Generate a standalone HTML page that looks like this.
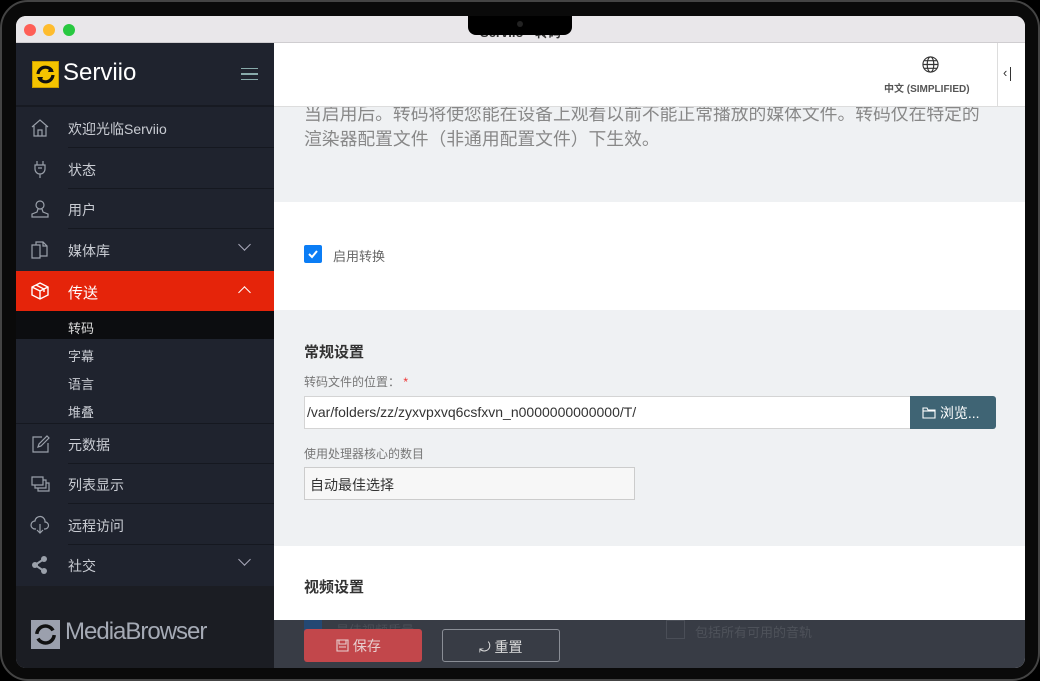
<!DOCTYPE html>
<html><head><meta charset="utf-8"><style>
*{box-sizing:border-box;margin:0;padding:0}
body{width:1040px;height:681px;background:#000;position:relative;overflow:hidden;font-family:"Liberation Sans","Noto Sans CJK SC",sans-serif}
.bez{position:absolute;left:0;top:0;width:1040px;height:681px;border-radius:28px;background:#0a0a0a;border:2px solid #444}
.win{position:absolute;left:16px;top:16px;width:1009px;height:652px;border-radius:10px;overflow:hidden;background:#fff}
.tb{position:absolute;left:0;top:0;width:1009px;height:27px;background:#e9e7ea;border-bottom:1px solid #cfcdd0}
.dot{position:absolute;top:8px;width:12px;height:12px;border-radius:50%}
.ttl{position:absolute;left:0;width:1009px;top:6px;text-align:center;font-size:13px;font-weight:bold;color:#333}
.notch{position:absolute;left:452px;top:0;width:104px;height:19px;background:#000;border-radius:0 0 8px 8px}
.sb{position:absolute;left:0;top:27px;width:258px;height:625px;background:#1f232e}
.logo{height:64px;border-bottom:2px solid #171a22;position:relative}
.it{position:absolute;left:0;width:258px;height:40px;color:#c9ccd3;font-size:14px}
.it span{position:absolute;left:52px;top:11px}
.it .ln{position:absolute;left:52px;right:0;bottom:0;height:1px;background:#151820}
.it svg{position:absolute;left:14px;top:10px}
.chev{position:absolute;left:224px;top:14px;width:9px;height:9px;border-right:1.3px solid #aab;border-bottom:1.3px solid #aab;transform:rotate(45deg)}
.sub{position:absolute;left:52px;color:#c9ccd3;font-size:13px}
.main{position:absolute;left:258px;top:27px;width:751px;height:625px}
.sec{position:absolute;left:0;width:751px}
.g{background:#eff1f3}
.lbl{font-size:12px;color:#777}
</style></head><body>
<div class="bez"></div>
<div class="win">
<div class="tb">
<div class="dot" style="left:8px;background:#fe5f57"></div>
<div class="dot" style="left:27px;background:#febc2e"></div>
<div class="dot" style="left:47px;background:#28c840"></div>
<div class="ttl">Serviio - 转码</div>
<div class="notch"><div style="position:absolute;left:49px;top:5px;width:6px;height:6px;border-radius:50%;background:#222"></div></div>
</div>
<div class="sb">
<div class="logo">
<div style="position:absolute;left:16px;top:18px;width:27px;height:27px;background:#f5c400;border:1px solid #c99c00">
<svg width="25" height="25" viewBox="0 0 25 25"><path d="M5 12a7.5 7.5 0 0 1 14-3" stroke="#111" stroke-width="3.2" fill="none"/><path d="M20 13a7.5 7.5 0 0 1-14 3" stroke="#111" stroke-width="3.2" fill="none"/><path d="M17 5l4 5-6 0z M8 20l-4-5 6 0z" fill="#111"/></svg></div>
<div style="position:absolute;left:47px;top:16px;font-size:24px;color:#fff">Serviio</div>
<div style="position:absolute;left:225px;top:25px;width:17px;height:12px;border-top:1.5px solid #8aa;border-bottom:1.5px solid #8aa"></div>
<div style="position:absolute;left:225px;top:30px;width:17px;height:1.5px;background:#8aa"></div>
</div>
<div class="it" style="top:65px"><svg width="20" height="20" viewBox="0 0 20 20" fill="none" stroke="#9aa0aa" stroke-width="1.2"><path d="M2 9L10 2l8 7M4 8v10h12V8M8 18v-6h4v6"/></svg><span>欢迎光临Serviio</span><div class="ln"></div></div>
<div class="it" style="top:106px"><svg width="20" height="20" viewBox="0 0 20 20" fill="none" stroke="#9aa0aa" stroke-width="1.2"><path d="M7 2v4M13 2v4M5 6h10v4a5 5 0 0 1-10 0zM10 15v4M8 9h4"/></svg><span>状态</span><div class="ln"></div></div>
<div class="it" style="top:146px"><svg width="20" height="20" viewBox="0 0 20 20" fill="none" stroke="#9aa0aa" stroke-width="1.2"><circle cx="10" cy="6" r="4"/><path d="M8 10l-1 3-5 2v3h16v-3l-5-2-1-3"/></svg><span>用户</span><div class="ln"></div></div>
<div class="it" style="top:187px"><svg width="20" height="20" viewBox="0 0 20 20" fill="none" stroke="#9aa0aa" stroke-width="1.2"><path d="M2 5h8v13H2zM6 5V2h7l4 4v10h-7M13 2v4h4"/></svg><span>媒体库</span><div class="chev" style="top:10px"></div></div>
<div class="it" style="top:228px;background:#e5240a;color:#fff"><svg width="20" height="20" viewBox="0 0 20 20" fill="none" stroke="#fff" stroke-width="1.4"><path d="M10 2l8 4v8l-8 4-8-4V6zM2 6l8 4 8-4M10 10v8M6 4l8 4v3"/></svg><span style="font-size:15px">传送</span><div class="chev" style="top:17px;transform:rotate(-135deg);border-color:#fff"></div></div>
<div style="position:absolute;top:268px;left:0;width:258px;height:28px;background:#0c0d10"></div>
<div class="sub" style="top:275px;color:#ddd">转码</div>
<div class="sub" style="top:303px">字幕</div>
<div class="sub" style="top:331px">语言</div>
<div class="sub" style="top:359px">堆叠</div>
<div style="position:absolute;top:380px;left:0;width:258px;height:1px;background:#151820"></div>
<div class="it" style="top:381px"><svg width="20" height="20" viewBox="0 0 20 20" fill="none" stroke="#9aa0aa" stroke-width="1.2"><path d="M12 3H3v15h15V9M8 13l1-3 8-8 2 2-8 8z"/></svg><span>元数据</span><div class="ln"></div></div>
<div class="it" style="top:421px"><svg width="20" height="20" viewBox="0 0 20 20" fill="none" stroke="#9aa0aa" stroke-width="1.2"><path d="M2 3h11v8H2zM5 11v3h11V6h-3M8 14v3h11V9h-3"/></svg><span>列表显示</span><div class="ln"></div></div>
<div class="it" style="top:462px"><svg width="20" height="20" viewBox="0 0 20 20" fill="none" stroke="#9aa0aa" stroke-width="1.2"><path d="M6 14H5a4 4 0 0 1 0-8 5 5 0 0 1 10 1 3.5 3.5 0 0 1 0 7h-1M10 9v9M7 15l3 3 3-3"/></svg><span>远程访问</span><div class="ln"></div></div>
<div class="it" style="top:502px"><svg width="20" height="20" viewBox="0 0 20 20" fill="#9aa0aa"><circle cx="14" cy="4" r="3"/><circle cx="5" cy="10" r="3"/><circle cx="14" cy="16" r="3"/><path d="M5 10L14 4M5 10l9 6" stroke="#9aa0aa" stroke-width="2"/></svg><span>社交</span><div class="chev" style="top:10px"></div></div>
<div style="position:absolute;top:543px;left:0;width:258px;height:82px;background:#1b1d23"></div>
<div style="position:absolute;left:15px;top:577px;width:29px;height:29px;background:#9ba0ad"><svg width="29" height="29" viewBox="0 0 25 25"><path d="M5 12a7.5 7.5 0 0 1 14-3" stroke="#111" stroke-width="3" fill="none"/><path d="M20 13a7.5 7.5 0 0 1-14 3" stroke="#111" stroke-width="3" fill="none"/></svg></div>
<div style="position:absolute;left:49px;top:575px;font-size:24px;color:#a5aab5;letter-spacing:-1px">MediaBrowser</div>
</div>
<div class="main">
<div class="sec g" style="top:64px;height:95px">
<div style="position:absolute;left:30px;top:-5px;width:720px;font-size:17.8px;line-height:25px;color:#888;white-space:nowrap">当启用后。转码将使您能在设备上观看以前不能正常播放的媒体文件。转码仅在特定的<br>渲染器配置文件（非通用配置文件）下生效。</div></div>
<div class="sec" style="top:0;height:64px;background:#fff;border-bottom:1px solid #ddd">
<svg style="position:absolute;left:648px;top:13px" width="17" height="17" viewBox="0 0 18 18" fill="none" stroke="#333" stroke-width="1.2"><circle cx="9" cy="9" r="8"/><ellipse cx="9" cy="9" rx="3.5" ry="8"/><path d="M1 9h16M2.5 5h13M2.5 13h13"/></svg>
<div style="position:absolute;left:610px;top:37px;font-size:10px;font-weight:bold;color:#555">中文 (SIMPLIFIED)</div>
<div style="position:absolute;left:723px;top:0;width:1px;height:64px;background:#ddd"></div>
<div style="position:absolute;left:729px;top:22px;font-size:13px;color:#333">‹</div>
<div style="position:absolute;left:736px;top:24px;width:1.3px;height:14px;background:#333"></div>
</div>
<div class="sec" style="top:159px;height:108px;background:#fff">
<div style="position:absolute;left:30px;top:43px;width:18px;height:18px;background:#0b7df5;border-radius:2px"><svg width="18" height="18"><path d="M5 9l3 3 5-6" stroke="#fff" stroke-width="2" fill="none"/></svg></div>
<div style="position:absolute;left:59px;top:44px;font-size:13px;color:#666">启用转换</div>
</div>
<div class="sec g" style="top:267px;height:236px">
<div style="position:absolute;left:30px;top:31px;font-size:15px;color:#333;font-weight:bold">常规设置</div>
<div class="lbl" style="position:absolute;left:30px;top:63px">转码文件的位置： <span style="color:#e33">*</span></div>
<div style="position:absolute;left:30px;top:86px;width:607px;height:33px;background:#fff;border:1px solid #d4d4d4;font-size:14px;color:#333;padding:7px 2px">/var/folders/zz/zyxvpxvq6csfxvn_n0000000000000/T/</div>
<div style="position:absolute;left:636px;top:86px;width:86px;height:33px;background:#3f6474;border-radius:0 3px 3px 0;color:#fff;font-size:14px;padding:7px 0 0 12px"><svg width="14" height="12" style="vertical-align:-1px" fill="none" stroke="#fff" stroke-width="1.1"><path d="M1 1h4l1 2h7v8H1z"/><path d="M1 4h12"/></svg> 浏览...</div>
<div class="lbl" style="position:absolute;left:30px;top:135px">使用处理器核心的数目</div>
<div style="position:absolute;left:30px;top:157px;width:331px;height:33px;background:#f7f7f7;border:1px solid #ccc;font-size:14px;color:#333;padding:7px 5px">自动最佳选择</div>
</div>
<div class="sec" style="top:503px;height:74px;background:#fff">
<div style="position:absolute;left:30px;top:30px;font-size:15px;color:#333;font-weight:bold">视频设置</div></div>
<div class="sec" style="top:577px;height:48px;background:#383c45">
<div style="position:absolute;left:30px;top:0;width:18px;height:18px;background:#1d4d88;opacity:.7"></div>
<div style="position:absolute;left:62px;top:0;font-size:13px;color:#4a4e56">最佳视频质量</div>
<div style="position:absolute;left:392px;top:0;width:19px;height:19px;border:1px solid #4a4e57"></div>
<div style="position:absolute;left:421px;top:2px;font-size:13px;color:#4e525a">包括所有可用的音轨</div>
<div style="position:absolute;left:30px;top:9px;width:118px;height:33px;background:#c2474b;border-radius:3px;color:#e8d0d0;font-size:14px;padding:7px 0 0 32px"><svg width="13" height="13" style="vertical-align:-1px" fill="none" stroke="#e8d0d0" stroke-width="1.1"><path d="M1 1h11v11H1zM3 1v4h7V1M3 8h7"/></svg> 保存</div>
<div style="position:absolute;left:168px;top:9px;width:118px;height:33px;border:1px solid #8a8e96;border-radius:3px;color:#ddd;font-size:14px;padding:7px 0 0 36px">⤾ 重置</div>
</div>
</div>
</div>
</body></html>
